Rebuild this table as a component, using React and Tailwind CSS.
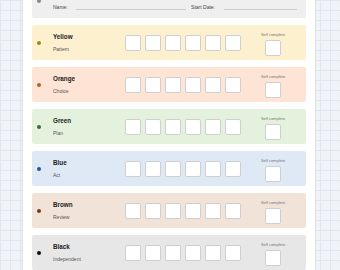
const LEVELS = [
  { name: 'Yellow', sub: 'Pattern', bg: 'bg-[#fdf0cf]', dot: 'bg-[#9a8a1c]' },
  { name: 'Orange', sub: 'Choice', bg: 'bg-[#fde4d4]', dot: 'bg-[#b5621f]' },
  { name: 'Green', sub: 'Plan', bg: 'bg-[#e4f2dd]', dot: 'bg-[#3f6a3a]' },
  { name: 'Blue', sub: 'Act', bg: 'bg-[#dfe9f6]', dot: 'bg-[#1f5793]' },
  { name: 'Brown', sub: 'Review', bg: 'bg-[#f2e3d9]', dot: 'bg-[#7a3621]' },
  { name: 'Black', sub: 'Independent', bg: 'bg-[#e7e7e7]', dot: 'bg-[#111111]' },
];

const Box = () => (
  <div className="w-[16px] h-[16px] bg-white border border-[#cfcfcf] rounded-[2px]" />
);

const LevelCard = ({ level }) => (
  <div className={`flex h-[35px] rounded-[2px] pl-[5px] ${level.bg}`}>
    <div className={`mt-[16px] w-[4px] h-[4px] rounded-full ${level.dot}`} />
    {/* Nombre del nivel */}
    <div className="ml-[12px] w-[72px] pt-[8px]">
      <p className="text-[6.3px] leading-[8px] font-bold text-[#222]">{level.name}</p>
      <p className="mt-[5px] text-[5px] leading-[6px] text-[#555]">{level.sub}</p>
    </div>
    {/* Casillas */}
    <div className="flex items-center gap-[4px]">
      {[0, 1, 2, 3, 4, 5].map((i) => (
        <Box key={i} />
      ))}
    </div>
    {/* Auto-completado */}
    <div className="ml-[18px] w-[28px] pt-[7px] flex flex-col items-center">
      <p className="text-[4px] leading-[5px] text-[#777] whitespace-nowrap">Self complete</p>
      <div className="mt-[3px]">
        <Box />
      </div>
    </div>
  </div>
);

export default function App() {
  return (
    <div
      className="w-[340px] h-[270px] overflow-hidden bg-[#f0f3f7] bg-[linear-gradient(to_right,#e2e7ef_1px,transparent_1px),linear-gradient(to_bottom,#e2e7ef_1px,transparent_1px)] bg-[size:10px_10px]"
      style={{ fontFamily: '"Liberation Sans", Arial, sans-serif' }}
    >
      <div className="ml-[23px] w-[292px] -mt-[17px] min-h-[300px] bg-white shadow-[0_0_2px_rgba(0,0,0,0.2)] px-[9px] flex flex-col gap-[7px]">
        {/* Cabecera */}
        <div className="flex h-[35px] rounded-[2px] pl-[5px] pr-[9px] bg-[#efefef]">
          <div className="mt-[16px] w-[4px] h-[4px] rounded-full bg-[#8a8a8a]" />
          <div className="ml-[12px] flex-1 pt-[21px]">
            <div className="flex items-end text-[5px] leading-[6px] text-[#444]">
              <span>Name:</span>
              <div className="ml-[8px] flex-1 border-b border-[#cccccc]" />
              <span className="ml-[5px]">Start Date:</span>
              <div className="ml-[9px] w-[73px] border-b border-[#cccccc]" />
            </div>
          </div>
        </div>
        {LEVELS.map((l) => (
          <LevelCard key={l.name} level={l} />
        ))}
      </div>
    </div>
  );
}
